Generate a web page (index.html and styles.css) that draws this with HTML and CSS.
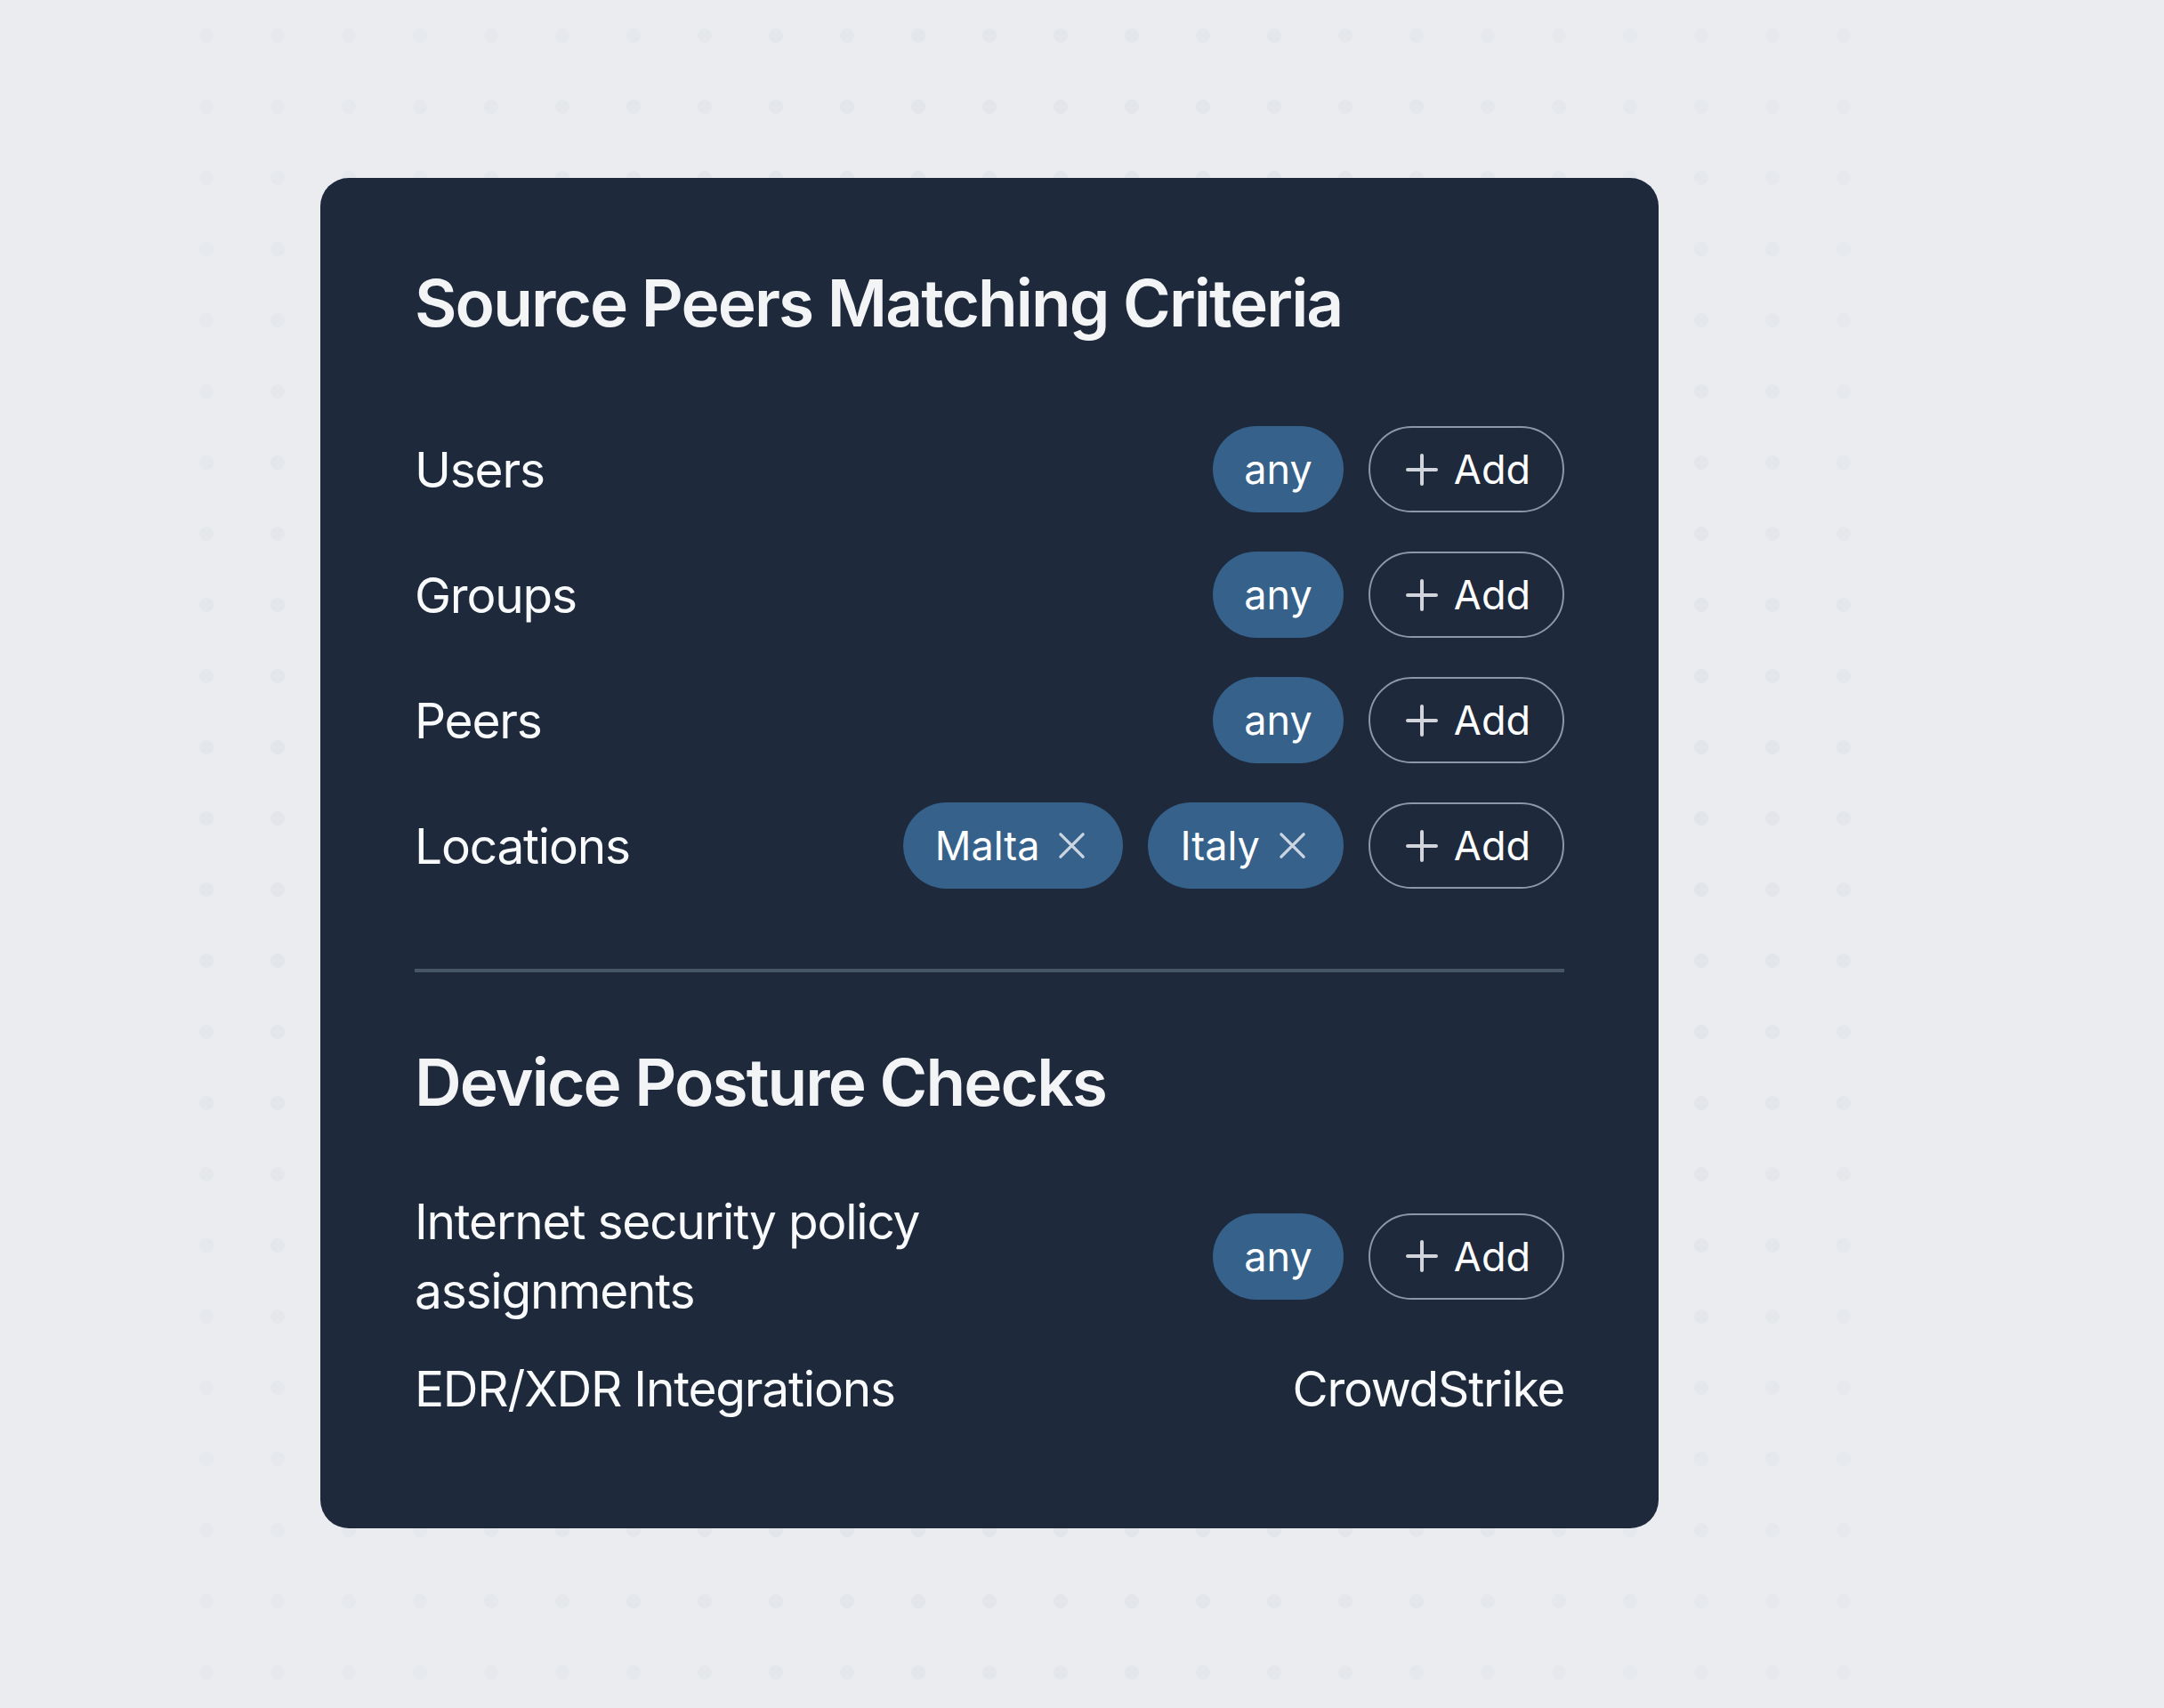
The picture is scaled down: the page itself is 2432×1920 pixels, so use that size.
FILE: index.html
```html
<!DOCTYPE html>
<html lang="en">
<head>
    <meta charset="UTF-8">
    <meta name="viewport" content="width=device-width, initial-scale=1.0">
    <title>Source Peers Matching Criteria</title>
    <link rel="stylesheet" href="styles.css">
</head>
<body>
    <div class="stage">
        <div class="card">
            <h2 class="title">Source Peers Matching Criteria</h2>
            <div class="rows">
                <div class="row">
                    <span class="label">Users</span>
                    <div class="chips">
                        <span class="chip">any</span>
                        <button class="add"><svg class="plus" viewBox="0 0 36 36"><path d="M18 2v32M2 18h32"/></svg>Add</button>
                    </div>
                </div>
                <div class="row">
                    <span class="label">Groups</span>
                    <div class="chips">
                        <span class="chip">any</span>
                        <button class="add"><svg class="plus" viewBox="0 0 36 36"><path d="M18 2v32M2 18h32"/></svg>Add</button>
                    </div>
                </div>
                <div class="row">
                    <span class="label">Peers</span>
                    <div class="chips">
                        <span class="chip">any</span>
                        <button class="add"><svg class="plus" viewBox="0 0 36 36"><path d="M18 2v32M2 18h32"/></svg>Add</button>
                    </div>
                </div>
                <div class="row">
                    <span class="label">Locations</span>
                    <div class="chips">
                        <span class="chip chip-tag">Malta<svg class="remove" viewBox="0 0 32 32"><path d="M3 3l26 26M29 3L3 29"/></svg></span>
                        <span class="chip chip-tag">Italy<svg class="remove" viewBox="0 0 32 32"><path d="M3 3l26 26M29 3L3 29"/></svg></span>
                        <button class="add"><svg class="plus" viewBox="0 0 36 36"><path d="M18 2v32M2 18h32"/></svg>Add</button>
                    </div>
                </div>
            </div>

            <hr class="divider">

            <h2 class="title">Device Posture Checks</h2>
            <div class="posture">
                <div class="row">
                    <span class="label label-wrap">Internet security policy assignments</span>
                    <div class="chips">
                        <span class="chip">any</span>
                        <button class="add"><svg class="plus" viewBox="0 0 36 36"><path d="M18 2v32M2 18h32"/></svg>Add</button>
                    </div>
                </div>
                <div class="row">
                    <span class="label">EDR/XDR Integrations</span>
                    <span class="label">CrowdStrike</span>
                </div>
            </div>
        </div>
    </div>
</body>
</html>
```

FILE: styles.css
```css
body {
    margin: 0;
    padding: 0;
    background-color: #eaecf0;
    font-family: Inter, 'Noto Sans', sans-serif;
    color: #f3f4f6;
}
.stage {
    position: relative;
    width: 1920px;
    height: 1920px;
    margin-left: 192px;
    padding: 200px 0 0 168px;
    box-sizing: border-box;
}
/* dotted backdrop, fades towards the edges */
.stage::before {
    content: "";
    position: absolute;
    inset: 0;
    background-image: radial-gradient(circle, #e0e3e8 7.5px, transparent 8.5px);
    background-size: 80px 80px;
    -webkit-mask-image: radial-gradient(ellipse 60% 60% at 50% 50%, #000 55%, rgba(0, 0, 0, 0.35) 100%);
    mask-image: radial-gradient(ellipse 60% 60% at 50% 50%, #000 55%, rgba(0, 0, 0, 0.35) 100%);
}
.card {
    position: relative;
    width: 1504px;
    height: 1518px;
    box-sizing: border-box;
    padding: 97px 106px 0 106px;
    background-color: #1e293b;
    border-radius: 32px;
}
.title {
    margin: 0;
    font-size: 73px;
    line-height: 88px;
    font-weight: 600;
    letter-spacing: -0.026em;
    color: #f3f4f6;
}
.rows {
    display: flex;
    flex-direction: column;
    gap: 44px;
    margin-top: 94px;
}
.row {
    display: flex;
    align-items: center;
    justify-content: space-between;
}
.label {
    font-size: 55px;
    line-height: 78px;
    font-weight: 400;
    letter-spacing: -0.022em;
    color: #f8fafc;
}
.label-wrap {
    max-width: 640px;
}
.chips {
    display: flex;
    align-items: center;
    gap: 28px;
}
.chip,
.add {
    display: inline-flex;
    align-items: center;
    height: 97px;
    box-sizing: border-box;
    border-radius: 999px;
    font-family: Inter, sans-serif;
    font-size: 45px;
    font-weight: 400;
    color: #ffffff;
}
.chip {
    padding: 0 35px;
    background-color: #35618a;
}
.chip-tag {
    padding-left: 36px;
    padding-right: 42px;
}
.remove {
    width: 31px;
    height: 31px;
    margin-left: 21px;
    fill: none;
    stroke: #cbd5e1;
    stroke-width: 3.5;
    stroke-linecap: round;
}
.add {
    padding: 0 36px 0 40px;
    background: transparent;
    border: 2px solid #8d97a7;
}
.plus {
    width: 36px;
    height: 36px;
    margin-right: 18px;
    fill: none;
    stroke: #d1d5db;
    stroke-width: 4;
    stroke-linecap: round;
}
.divider {
    margin: 90px 0 80px;
    border: 0;
    border-top: 4px solid #475569;
}
.posture {
    display: flex;
    flex-direction: column;
    gap: 32px;
    margin-top: 73px;
}
```
